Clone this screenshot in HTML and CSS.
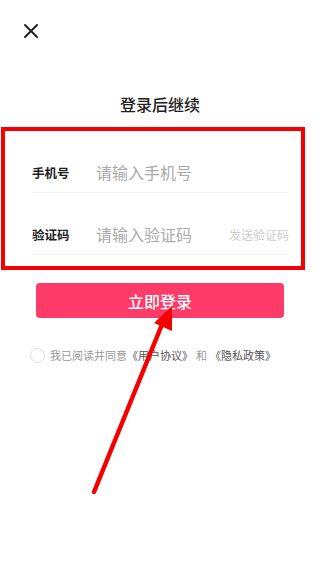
FILE: index.html
```html
<!DOCTYPE html>
<html lang="zh-CN">
  <head>
    <meta charset="UTF-8" />
    <meta name="viewport" content="width=device-width, initial-scale=1.0" />
    <title>登录后继续</title>
    <link rel="stylesheet" href="styles.css">
  </head>
  <body>
    <div class="page">
      <div class="top-bar">
        <button class="close-btn" aria-label="关闭">
          <svg width="16" height="16" viewBox="0 0 16 16">
            <path d="M2 2 L14 14 M14 2 L2 14" stroke="#222" stroke-width="2" stroke-linecap="round" />
          </svg>
        </button>
      </div>

      <h1 class="title">登录后继续</h1>

      <div class="form-box">
        <div class="field">
          <span class="field-label">手机号</span>
          <span class="field-input">请输入手机号</span>
        </div>
        <div class="field">
          <span class="field-label">验证码</span>
          <span class="field-input">请输入验证码</span>
          <span class="send-code">发送验证码</span>
        </div>
      </div>

      <button class="login-btn">立即登录</button>

      <div class="agree">
        <span class="radio"></span>
        <span class="agree-text">我已阅读并同意<span class="link">《用户协议》</span><span class="and">和</span><span class="link">《隐私政策》</span></span>
      </div>

      <svg class="arrow" width="320" height="569" viewBox="0 0 320 569">
        <line x1="94" y1="492" x2="163" y2="322" stroke="#f40000" stroke-width="4.5" stroke-linecap="round" />
        <polygon points="172,306 154,323 172,331" fill="#f40000" />
      </svg>
    </div>
  </body>
</html>
```

FILE: styles.css
```css
* {
  box-sizing: border-box;
}

body {
  margin: 0;
  background: #fff;
  font-family: "Noto Sans CJK SC", "Noto Sans", sans-serif;
  color: #222;
}

.page {
  position: relative;
  width: 320px;
  height: 569px;
  overflow: hidden;
}

.top-bar {
  height: 62px;
  padding: 23px 0 0 23px;
}

.close-btn {
  display: block;
  width: 16px;
  height: 16px;
  padding: 0;
  border: none;
  background: none;
}

.close-btn svg {
  display: block;
}

.title {
  margin: 30px 0 0;
  font-size: 16px;
  font-weight: 500;
  line-height: 24px;
  text-align: center;
  color: #222;
}

.form-box {
  width: 304px;
  margin: 11px 0 0 1px;
  padding: 0 12px 11px 27px;
  border: 4px solid #f40000;
}

.field {
  display: flex;
  align-items: center;
  height: 41px;
  margin-top: 21px;
  border-bottom: 1px solid #f2f2f2;
}

.field-label {
  width: 64px;
  font-size: 12.5px;
  font-weight: 700;
  color: #222;
}

.field-input {
  flex: 1;
  font-size: 16px;
  color: #aaa;
}

.send-code {
  font-size: 12px;
  color: #ccc;
}

.login-btn {
  display: block;
  width: 248px;
  height: 35px;
  margin: 13px auto 0;
  border: none;
  border-radius: 4px;
  background: #fe3a69;
  color: #fff;
  font-family: inherit;
  font-size: 16px;
  font-weight: 500;
}

.agree {
  display: flex;
  align-items: center;
  margin: 29px 0 0 30px;
  font-size: 11px;
  color: #999;
}

.radio {
  width: 15px;
  height: 15px;
  margin-right: 5px;
  border: 1px solid #ddd;
  border-radius: 50%;
}

.link {
  color: #555;
}

.and {
  margin: 0 3px;
}

.arrow {
  position: absolute;
  left: 0;
  top: 0;
  pointer-events: none;
}
```
